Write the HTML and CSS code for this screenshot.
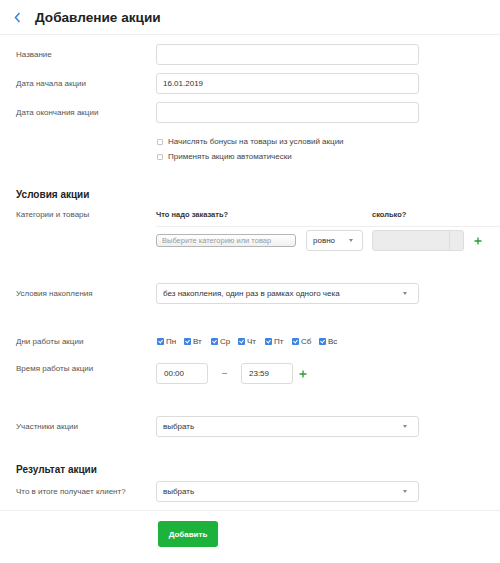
FILE: index.html
```html
<!DOCTYPE html>
<html lang="ru">
<head>
	<meta charset="UTF-8">
	<title>Добавление акции</title>
	<link rel="stylesheet" href="styles.css">
</head>
<body>
	<div class="top">
		<span class="back">
			<svg width="7" height="11" viewBox="0 0 7 11"><polyline points="5.5,1 1.5,5.5 5.5,10" fill="none" stroke="#3d85e0" stroke-width="1.6"/></svg>
		</span>
		<h1>Добавление акции</h1>
	</div>

	<div class="form">
		<div class="row first">
			<div class="label">Название</div>
			<input type="text" class="inp wide">
		</div>
		<div class="row gap8">
			<div class="label">Дата начала акции</div>
			<input type="text" class="inp wide" value="16.01.2019">
		</div>
		<div class="row gap8">
			<div class="label">Дата окончания акции</div>
			<input type="text" class="inp wide">
		</div>

		<div class="checks">
			<div class="chk"><span class="box"></span>Начислять бонусы на товары из условий акции</div>
			<div class="chk"><span class="box"></span>Применять акцию автоматически</div>
		</div>

		<h2 class="section s1">Условия акции</h2>

		<div class="row goods-head">
			<div class="label">Категории и товары</div>
			<div class="cols">
				<div class="col-what">Что надо заказать?</div>
				<div class="col-much">сколько?</div>
			</div>
		</div>
		<div class="row goods-row">
			<div class="label"></div>
			<div class="ph">Выберите категорию или товар</div>
			<div class="select small">ровно<span class="arrow"></span></div>
			<div class="amount"><span class="cell"></span></div>
			<span class="plus">
				<svg width="8" height="8" viewBox="0 0 8 8"><path d="M4 0.5v7M0.5 4h7" stroke="#2a9a32" stroke-width="1.3"/></svg>
			</span>
		</div>

		<div class="row accum">
			<div class="label">Условия накопления</div>
			<div class="select wide">без накопления, один раз в рамках одного чека<span class="arrow"></span></div>
		</div>

		<div class="row days">
			<div class="label">Дни работы акции</div>
			<div class="day"><span class="box on"></span>Пн</div>
			<div class="day"><span class="box on"></span>Вт</div>
			<div class="day"><span class="box on"></span>Ср</div>
			<div class="day"><span class="box on"></span>Чт</div>
			<div class="day"><span class="box on"></span>Пт</div>
			<div class="day"><span class="box on"></span>Сб</div>
			<div class="day"><span class="box on"></span>Вс</div>
		</div>

		<div class="row time">
			<div class="label">Время работы акции</div>
			<input type="text" class="inp t1" value="00:00">
			<span class="dash">–</span>
			<input type="text" class="inp t2" value="23:59">
			<span class="plus">
				<svg width="8" height="8" viewBox="0 0 8 8"><path d="M4 0.5v7M0.5 4h7" stroke="#2a9a32" stroke-width="1.3"/></svg>
			</span>
		</div>

		<div class="row members">
			<div class="label">Участники акции</div>
			<div class="select wide">выбрать<span class="arrow"></span></div>
		</div>

		<h2 class="section s2">Результат акции</h2>

		<div class="row result">
			<div class="label">Что в итоге получает клиент?</div>
			<div class="select wide">выбрать<span class="arrow"></span></div>
		</div>
	</div>

	<div class="bottom">
		<button type="button">Добавить</button>
	</div>
</body>
</html>
```

FILE: styles.css
```css
body {
	margin: 0;
	font-family: "Liberation Sans", Arial, sans-serif;
	color: #333;
	background: #fff;
}
div.top {
	height: 34px;
	border-bottom: 1px solid #eee;
	display: flex;
	align-items: center;
	padding-left: 14px;
}
div.top .back {
	display: flex;
	width: 21px;
}
div.top h1 {
	margin: 0;
	font-size: 13.6px;
	font-weight: bold;
	color: #222;
}
div.form {
	padding: 0 16px;
}
div.row {
	display: flex;
	align-items: center;
}
div.row .label {
	width: 140px;
	flex: none;
	font-size: 8px;
	color: #555;
}
div.row.first {
	margin-top: 9px;
}
div.row.gap8 {
	margin-top: 8px;
}
.inp {
	box-sizing: border-box;
	height: 21px;
	border: 1px solid #dcdcdc;
	border-radius: 3px;
	padding: 0 6px;
	font-family: inherit;
	font-size: 8px;
	color: #333;
	outline: none;
}
.wide {
	width: 263px;
}
div.checks {
	margin-top: 11px;
	padding-left: 140px;
}
div.chk {
	height: 15px;
	display: flex;
	align-items: center;
	font-size: 8px;
	color: #444;
}
.box {
	box-sizing: border-box;
	width: 6px;
	height: 6px;
	border: 1px solid #c4c4c4;
	border-radius: 1px;
	margin: 0 5px 0 1px;
	flex: none;
}
.box.on {
	width: 7px;
	height: 7px;
	border: none;
	background: #3d85e0;
	position: relative;
	margin: 0 2px 0 1px;
}
.box.on::after {
	content: "";
	position: absolute;
	left: 2px;
	top: 1px;
	width: 2px;
	height: 3px;
	border: solid #fff;
	border-width: 0 1px 1px 0;
	transform: rotate(40deg);
}
h2.section {
	margin: 0;
	font-size: 10px;
	line-height: 14px;
	font-weight: bold;
	color: #222;
}
h2.s1 {
	margin-top: 24px;
}
h2.s2 {
	margin-top: 26px;
}
div.goods-head {
	margin-top: 7px;
	margin-right: -16px;
	align-items: flex-start;
}
div.goods-head .label {
	line-height: 12px;
}
div.cols {
	flex: 1;
	display: flex;
	font-size: 7.5px;
	font-weight: bold;
	color: #333;
	line-height: 12px;
	padding-bottom: 5px;
	border-bottom: 1px solid #eee;
}
div.col-what {
	width: 216px;
}
div.goods-row {
	margin-top: 3px;
}
div.ph {
	box-sizing: border-box;
	width: 140px;
	height: 13px;
	border: 1px solid #b4b4b4;
	border-radius: 3px;
	background: linear-gradient(#fff, #f0f0f0);
	font-size: 7.5px;
	color: #9a9a9a;
	padding-left: 5px;
	line-height: 11px;
	margin-right: 10px;
}
.select {
	box-sizing: border-box;
	height: 21px;
	border: 1px solid #dcdcdc;
	border-radius: 3px;
	padding: 0 6px;
	font-size: 8px;
	color: #333;
	display: flex;
	align-items: center;
	justify-content: space-between;
}
.select.small {
	width: 57px;
	margin-right: 9px;
}
.select .arrow {
	width: 0;
	height: 0;
	border-left: 2.5px solid transparent;
	border-right: 2.5px solid transparent;
	border-top: 3px solid #888;
	margin-right: 3px;
}
.select.wide .arrow {
	margin-right: 5px;
}
div.amount {
	box-sizing: border-box;
	width: 92px;
	height: 21px;
	border: 1px solid #ddd;
	border-radius: 3px;
	background: #ececec;
	display: flex;
	justify-content: flex-end;
}
div.amount .cell {
	width: 13px;
	border-left: 1px solid #dcdcdc;
}
.plus {
	display: flex;
}
div.goods-row .plus {
	margin-left: 10px;
}
div.accum {
	margin-top: 32px;
}
div.days {
	margin-top: 30px;
	height: 14px;
}
div.day {
	width: 27px;
	display: flex;
	align-items: center;
	font-size: 8px;
	color: #444;
}
div.time {
	margin-top: 15px;
	align-items: flex-start;
}
div.time .label {
	padding-top: 1px;
}
div.time .inp {
	width: 52px;
	padding: 0 7px;
}
div.time .dash {
	width: 33px;
	text-align: center;
	font-size: 9px;
	color: #666;
	line-height: 21px;
}
div.time .plus {
	margin-left: 6px;
	margin-top: 7px;
}
div.members {
	margin-top: 32px;
}
div.result {
	margin-top: 4px;
}
div.bottom {
	margin-top: 8px;
	border-top: 1px solid #eee;
	padding: 10px 0 0 158px;
}
div.bottom button {
	width: 60px;
	height: 26px;
	border: none;
	border-radius: 3px;
	background: #1db23c;
	color: #fff;
	font-family: inherit;
	font-size: 8px;
	font-weight: bold;
}
```
